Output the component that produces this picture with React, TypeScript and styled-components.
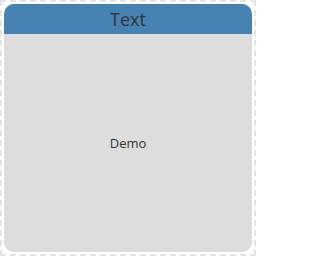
import React from 'react';
import styled, { createGlobalStyle } from 'styled-components';

const Global = createGlobalStyle`
  html, body {
    margin: 0;
    padding: 0;
    background: #ffffff;
  }
  body {
    font-family: 'Open Sans', 'Noto Sans', sans-serif;
  }
`;

const Frame = styled.div`
  box-sizing: border-box;
  width: 256px;
  height: 256px;
  border: 2px dashed #e4e4e4;
  padding: 2px;
  display: flex;
`;

const Card = styled.div`
  flex: 1;
  display: flex;
  flex-direction: column;
  border-radius: 10px;
  overflow: hidden;
  background: #dddddd;
`;

const Header = styled.div`
  height: 30px;
  background: #4682b4;
  color: #333333;
  font-size: 18px;
  display: flex;
  align-items: center;
  justify-content: center;
`;

const Body = styled.div`
  flex: 1;
  display: flex;
  align-items: center;
  justify-content: center;
  color: #333333;
  font-size: 13px;
`;

export default function App() {
  return (
    <>
      <Global />
      <Frame>
        <Card>
          <Header>Text</Header>
          <Body>Demo</Body>
        </Card>
      </Frame>
    </>
  );
}
